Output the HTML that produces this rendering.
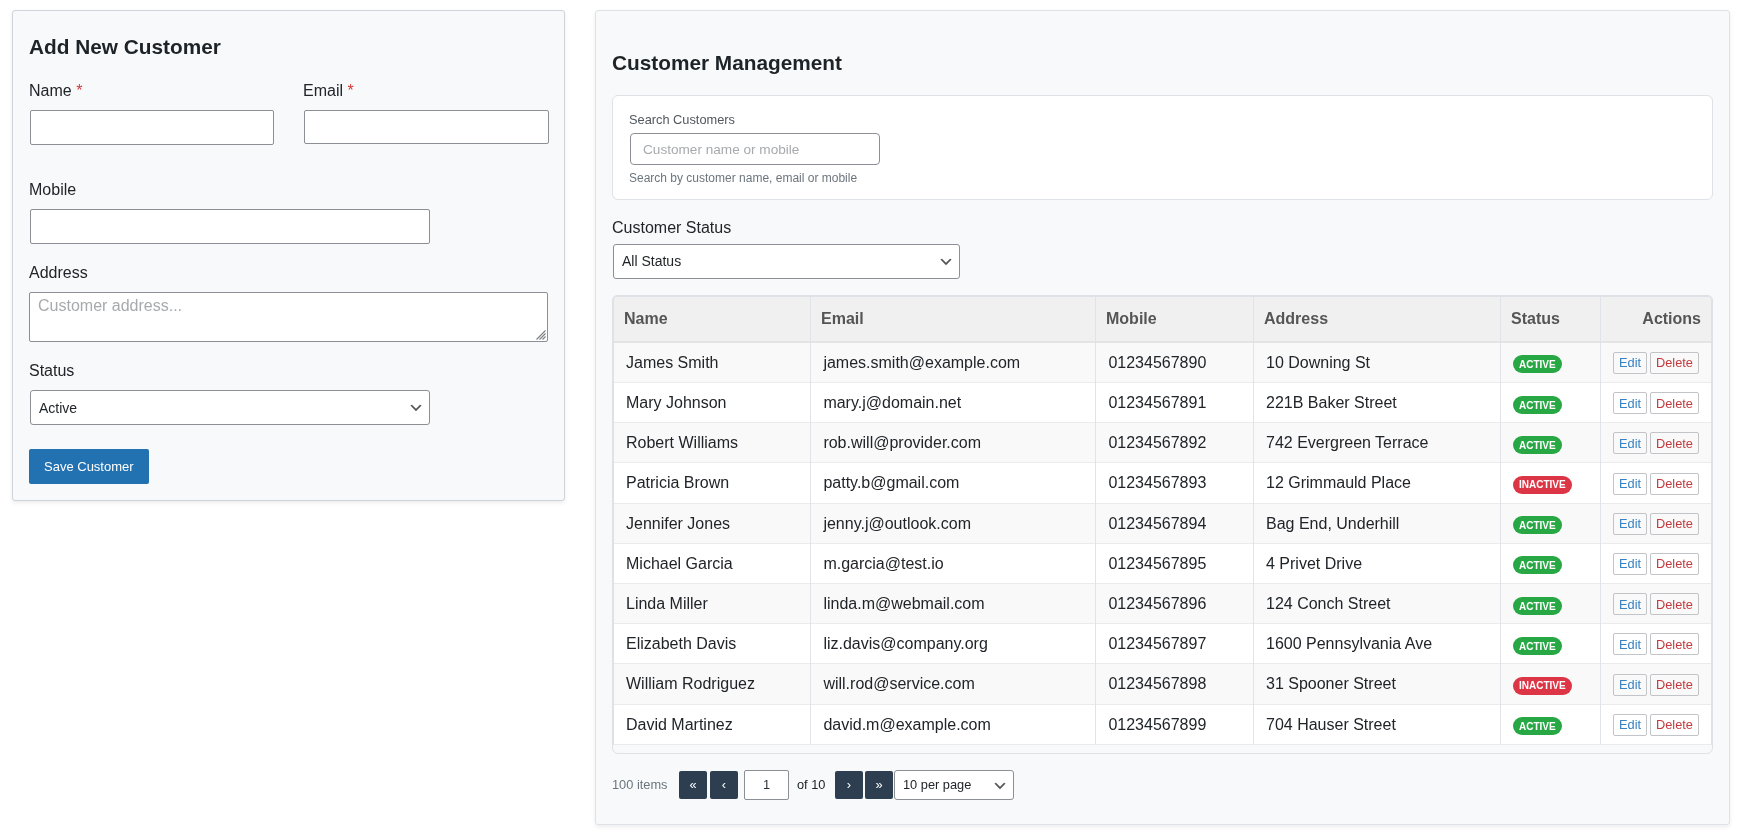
<!DOCTYPE html>
<html><head><meta charset="utf-8">
<style>
*{box-sizing:border-box;}
html,body{margin:0;padding:0;background:#fff;}
body{font-family:"Liberation Sans",sans-serif;color:#2c3338;width:1738px;height:832px;overflow:hidden;position:relative;}
.abs{position:absolute;}
.t{position:absolute;white-space:nowrap;line-height:1;}
</style></head><body>
<div style="position:absolute;left:0;top:0;width:1738px;height:832px;background:#fff;will-change:transform;">
<div class="abs" style="left:12px;top:10px;width:553px;height:491px;background:#f8f9fa;border:1px solid #ced4da;border-radius:3px;box-shadow:0 2px 4px rgba(0,0,0,.075);"></div>
<div class="t" style="left:29px;top:37px;font-size:20.8px;color:#1d2327;font-weight:700;">Add New Customer</div>
<div class="t" style="left:29px;top:83px;font-size:16px;color:#212529;">Name <span style="color:#d63638">*</span></div>
<div class="abs" style="left:30px;top:110px;width:244px;height:35px;background:#fff;border:1px solid #8c8f94;border-radius:2px;"></div>
<div class="t" style="left:303px;top:83px;font-size:16px;color:#212529;">Email <span style="color:#d63638">*</span></div>
<div class="abs" style="left:304px;top:110px;width:245px;height:34px;background:#fff;border:1px solid #8c8f94;border-radius:2px;"></div>
<div class="t" style="left:29px;top:182px;font-size:16px;color:#212529;">Mobile</div>
<div class="abs" style="left:30px;top:209px;width:400px;height:35px;background:#fff;border:1px solid #8c8f94;border-radius:2px;"></div>
<div class="t" style="left:29px;top:265px;font-size:16px;color:#212529;">Address</div>
<div class="abs" style="left:29px;top:292px;width:519px;height:50px;background:#fff;border:1px solid #8c8f94;border-radius:2px;"></div>
<div class="t" style="left:38px;top:298px;font-size:16px;color:#a7aaad;">Customer address...</div>
<svg class="abs" style="left:534px;top:328px;" width="13" height="13" viewBox="0 0 13 13"><path d="M2.5 11.5L11.5 2.5M5.5 11.5L11.5 5.5M8.5 11.5L11.5 8.5" stroke="#7a7d82" stroke-width="1.1"/></svg>
<div class="t" style="left:29px;top:363px;font-size:16px;color:#212529;">Status</div>
<div class="abs" style="left:30px;top:390px;width:400px;height:35px;background:#fff;border:1px solid #8c8f94;border-radius:3px;"></div>
<div class="t" style="left:39px;top:401px;font-size:14px;color:#212529;">Active</div>
<svg class="abs" style="left:408px;top:400px;" width="16" height="16" viewBox="0 0 20 20"><path d="M5 6l5 5 5-5 2 1-7 7-7-7 2-1z" fill="#555"/></svg>
<div class="abs" style="left:29px;top:449px;width:120px;height:35px;background:#2271b1;border-radius:2px;"></div>
<div class="t" style="left:44px;top:460px;font-size:13px;color:#fff;">Save Customer</div>
<div class="abs" style="left:595px;top:10px;width:1135px;height:815px;background:#f8f9fa;border:1px solid #dee2e6;border-radius:3px;box-shadow:0 2px 4px rgba(0,0,0,.075);"></div>
<div class="t" style="left:612px;top:53px;font-size:20.8px;color:#1d2327;font-weight:700;">Customer Management</div>
<div class="abs" style="left:612px;top:95px;width:1101px;height:105px;background:#fff;border:1px solid #dee2e6;border-radius:6px;"></div>
<div class="t" style="left:629px;top:114px;font-size:12.8px;color:#50575e;">Search Customers</div>
<div class="abs" style="left:630px;top:133px;width:250px;height:32px;background:#fff;border:1px solid #8c8f94;border-radius:2px;border-radius:4px;"></div>
<div class="t" style="left:643px;top:143px;font-size:13.6px;color:#a7aaad;">Customer name or mobile</div>
<div class="t" style="left:629px;top:172px;font-size:12px;color:#6c757d;">Search by customer name, email or mobile</div>
<div class="t" style="left:612px;top:220px;font-size:16px;color:#212529;">Customer Status</div>
<div class="abs" style="left:613px;top:244px;width:347px;height:35px;background:#fff;border:1px solid #8c8f94;border-radius:3px;"></div>
<div class="t" style="left:622px;top:254px;font-size:14px;color:#212529;">All Status</div>
<svg class="abs" style="left:938px;top:254px;" width="16" height="16" viewBox="0 0 20 20"><path d="M5 6l5 5 5-5 2 1-7 7-7-7 2-1z" fill="#555"/></svg>
<div class="abs" style="left:612px;top:295px;width:1101px;height:459px;background:#f8f9fa;border:1px solid #dee2e6;border-radius:5px 5px 6px 6px;"></div>
<div class="abs" style="left:614px;top:297px;width:1097px;height:44px;background:#f0f0f1;border-top-left-radius:3px;border-top-right-radius:3px;"></div>
<div class="abs" style="left:614px;top:341px;width:1097px;height:2px;background:#e4e4e4;"></div>
<div class="abs" style="left:614px;top:343px;width:1097px;height:39px;background:#f9f9f9;"></div>
<div class="abs" style="left:614px;top:382px;width:1097px;height:1px;background:#ebebeb;"></div>
<div class="abs" style="left:614px;top:383px;width:1097px;height:39px;background:#fff;"></div>
<div class="abs" style="left:614px;top:422px;width:1097px;height:1px;background:#ebebeb;"></div>
<div class="abs" style="left:614px;top:423px;width:1097px;height:39px;background:#f9f9f9;"></div>
<div class="abs" style="left:614px;top:462px;width:1097px;height:1px;background:#ebebeb;"></div>
<div class="abs" style="left:614px;top:463px;width:1097px;height:40px;background:#fff;"></div>
<div class="abs" style="left:614px;top:503px;width:1097px;height:1px;background:#ebebeb;"></div>
<div class="abs" style="left:614px;top:504px;width:1097px;height:39px;background:#f9f9f9;"></div>
<div class="abs" style="left:614px;top:543px;width:1097px;height:1px;background:#ebebeb;"></div>
<div class="abs" style="left:614px;top:544px;width:1097px;height:39px;background:#fff;"></div>
<div class="abs" style="left:614px;top:583px;width:1097px;height:1px;background:#ebebeb;"></div>
<div class="abs" style="left:614px;top:584px;width:1097px;height:39px;background:#f9f9f9;"></div>
<div class="abs" style="left:614px;top:623px;width:1097px;height:1px;background:#ebebeb;"></div>
<div class="abs" style="left:614px;top:624px;width:1097px;height:39px;background:#fff;"></div>
<div class="abs" style="left:614px;top:663px;width:1097px;height:1px;background:#ebebeb;"></div>
<div class="abs" style="left:614px;top:664px;width:1097px;height:40px;background:#f9f9f9;"></div>
<div class="abs" style="left:614px;top:704px;width:1097px;height:1px;background:#ebebeb;"></div>
<div class="abs" style="left:614px;top:705px;width:1097px;height:39px;background:#fff;"></div>
<div class="abs" style="left:614px;top:744px;width:1097px;height:1px;background:#ebebeb;"></div>
<div class="abs" style="left:810px;top:297px;width:1px;height:448px;background:#e0e4ea;"></div>
<div class="abs" style="left:1095px;top:297px;width:1px;height:448px;background:#e0e4ea;"></div>
<div class="abs" style="left:1253px;top:297px;width:1px;height:448px;background:#e0e4ea;"></div>
<div class="abs" style="left:1500px;top:297px;width:1px;height:448px;background:#e0e4ea;"></div>
<div class="abs" style="left:1600px;top:297px;width:1px;height:448px;background:#e0e4ea;"></div>
<div class="abs" style="left:613px;top:296px;width:1099px;height:449px;border:1px solid #dee2e6;border-bottom:0;border-top-left-radius:4px;border-top-right-radius:4px;"></div>
<div class="t" style="left:624px;top:311px;font-size:16px;color:#555;font-weight:700;">Name</div>
<div class="t" style="left:821px;top:311px;font-size:16px;color:#555;font-weight:700;">Email</div>
<div class="t" style="left:1106px;top:311px;font-size:16px;color:#555;font-weight:700;">Mobile</div>
<div class="t" style="left:1264px;top:311px;font-size:16px;color:#555;font-weight:700;">Address</div>
<div class="t" style="left:1511px;top:311px;font-size:16px;color:#555;font-weight:700;">Status</div>
<div class="t" style="left:1600px;top:311px;font-size:16px;color:#555;font-weight:700;width:101px;text-align:right;">Actions</div>
<div class="t" style="left:626px;top:355px;font-size:16px;color:#212529;">James Smith</div>
<div class="t" style="left:823.4px;top:355px;font-size:16px;color:#212529;">james.smith@example.com</div>
<div class="t" style="left:1108.4px;top:355px;font-size:16px;color:#212529;">01234567890</div>
<div class="t" style="left:1266px;top:355px;font-size:16px;color:#212529;">10 Downing St</div>
<div class="abs" style="left:1513px;top:355px;width:49px;height:18px;background:#28a745;border-radius:9px;"></div>
<div class="t" style="left:1519px;top:360px;font-size:10px;color:#fff;font-weight:700;">ACTIVE</div>
<div class="abs" style="left:1613px;top:352px;width:34px;height:22px;border:1px solid #c3c4c7;border-radius:2px;"></div>
<div class="t" style="left:1619px;top:357px;font-size:12.8px;color:#3582c4;">Edit</div>
<div class="abs" style="left:1650px;top:352px;width:49px;height:22px;border:1px solid #c3c4c7;border-radius:2px;"></div>
<div class="t" style="left:1656px;top:357px;font-size:12.8px;color:#c23a3e;">Delete</div>
<div class="t" style="left:626px;top:395px;font-size:16px;color:#212529;">Mary Johnson</div>
<div class="t" style="left:823.4px;top:395px;font-size:16px;color:#212529;">mary.j@domain.net</div>
<div class="t" style="left:1108.4px;top:395px;font-size:16px;color:#212529;">01234567891</div>
<div class="t" style="left:1266px;top:395px;font-size:16px;color:#212529;">221B Baker Street</div>
<div class="abs" style="left:1513px;top:396px;width:49px;height:18px;background:#28a745;border-radius:9px;"></div>
<div class="t" style="left:1519px;top:401px;font-size:10px;color:#fff;font-weight:700;">ACTIVE</div>
<div class="abs" style="left:1613px;top:392px;width:34px;height:22px;border:1px solid #c3c4c7;border-radius:2px;"></div>
<div class="t" style="left:1619px;top:398px;font-size:12.8px;color:#3582c4;">Edit</div>
<div class="abs" style="left:1650px;top:392px;width:49px;height:22px;border:1px solid #c3c4c7;border-radius:2px;"></div>
<div class="t" style="left:1656px;top:398px;font-size:12.8px;color:#c23a3e;">Delete</div>
<div class="t" style="left:626px;top:435px;font-size:16px;color:#212529;">Robert Williams</div>
<div class="t" style="left:823.4px;top:435px;font-size:16px;color:#212529;">rob.will@provider.com</div>
<div class="t" style="left:1108.4px;top:435px;font-size:16px;color:#212529;">01234567892</div>
<div class="t" style="left:1266px;top:435px;font-size:16px;color:#212529;">742 Evergreen Terrace</div>
<div class="abs" style="left:1513px;top:436px;width:49px;height:18px;background:#28a745;border-radius:9px;"></div>
<div class="t" style="left:1519px;top:441px;font-size:10px;color:#fff;font-weight:700;">ACTIVE</div>
<div class="abs" style="left:1613px;top:432px;width:34px;height:22px;border:1px solid #c3c4c7;border-radius:2px;"></div>
<div class="t" style="left:1619px;top:438px;font-size:12.8px;color:#3582c4;">Edit</div>
<div class="abs" style="left:1650px;top:432px;width:49px;height:22px;border:1px solid #c3c4c7;border-radius:2px;"></div>
<div class="t" style="left:1656px;top:438px;font-size:12.8px;color:#c23a3e;">Delete</div>
<div class="t" style="left:626px;top:475px;font-size:16px;color:#212529;">Patricia Brown</div>
<div class="t" style="left:823.4px;top:475px;font-size:16px;color:#212529;">patty.b@gmail.com</div>
<div class="t" style="left:1108.4px;top:475px;font-size:16px;color:#212529;">01234567893</div>
<div class="t" style="left:1266px;top:475px;font-size:16px;color:#212529;">12 Grimmauld Place</div>
<div class="abs" style="left:1513px;top:476px;width:59px;height:18px;background:#dc3545;border-radius:9px;"></div>
<div class="t" style="left:1519px;top:480px;font-size:10px;color:#fff;font-weight:700;">INACTIVE</div>
<div class="abs" style="left:1613px;top:473px;width:34px;height:22px;border:1px solid #c3c4c7;border-radius:2px;"></div>
<div class="t" style="left:1619px;top:478px;font-size:12.8px;color:#3582c4;">Edit</div>
<div class="abs" style="left:1650px;top:473px;width:49px;height:22px;border:1px solid #c3c4c7;border-radius:2px;"></div>
<div class="t" style="left:1656px;top:478px;font-size:12.8px;color:#c23a3e;">Delete</div>
<div class="t" style="left:626px;top:516px;font-size:16px;color:#212529;">Jennifer Jones</div>
<div class="t" style="left:823.4px;top:516px;font-size:16px;color:#212529;">jenny.j@outlook.com</div>
<div class="t" style="left:1108.4px;top:516px;font-size:16px;color:#212529;">01234567894</div>
<div class="t" style="left:1266px;top:516px;font-size:16px;color:#212529;">Bag End, Underhill</div>
<div class="abs" style="left:1513px;top:516px;width:49px;height:18px;background:#28a745;border-radius:9px;"></div>
<div class="t" style="left:1519px;top:521px;font-size:10px;color:#fff;font-weight:700;">ACTIVE</div>
<div class="abs" style="left:1613px;top:513px;width:34px;height:22px;border:1px solid #c3c4c7;border-radius:2px;"></div>
<div class="t" style="left:1619px;top:518px;font-size:12.8px;color:#3582c4;">Edit</div>
<div class="abs" style="left:1650px;top:513px;width:49px;height:22px;border:1px solid #c3c4c7;border-radius:2px;"></div>
<div class="t" style="left:1656px;top:518px;font-size:12.8px;color:#c23a3e;">Delete</div>
<div class="t" style="left:626px;top:556px;font-size:16px;color:#212529;">Michael Garcia</div>
<div class="t" style="left:823.4px;top:556px;font-size:16px;color:#212529;">m.garcia@test.io</div>
<div class="t" style="left:1108.4px;top:556px;font-size:16px;color:#212529;">01234567895</div>
<div class="t" style="left:1266px;top:556px;font-size:16px;color:#212529;">4 Privet Drive</div>
<div class="abs" style="left:1513px;top:556px;width:49px;height:18px;background:#28a745;border-radius:9px;"></div>
<div class="t" style="left:1519px;top:561px;font-size:10px;color:#fff;font-weight:700;">ACTIVE</div>
<div class="abs" style="left:1613px;top:553px;width:34px;height:22px;border:1px solid #c3c4c7;border-radius:2px;"></div>
<div class="t" style="left:1619px;top:558px;font-size:12.8px;color:#3582c4;">Edit</div>
<div class="abs" style="left:1650px;top:553px;width:49px;height:22px;border:1px solid #c3c4c7;border-radius:2px;"></div>
<div class="t" style="left:1656px;top:558px;font-size:12.8px;color:#c23a3e;">Delete</div>
<div class="t" style="left:626px;top:596px;font-size:16px;color:#212529;">Linda Miller</div>
<div class="t" style="left:823.4px;top:596px;font-size:16px;color:#212529;">linda.m@webmail.com</div>
<div class="t" style="left:1108.4px;top:596px;font-size:16px;color:#212529;">01234567896</div>
<div class="t" style="left:1266px;top:596px;font-size:16px;color:#212529;">124 Conch Street</div>
<div class="abs" style="left:1513px;top:597px;width:49px;height:18px;background:#28a745;border-radius:9px;"></div>
<div class="t" style="left:1519px;top:602px;font-size:10px;color:#fff;font-weight:700;">ACTIVE</div>
<div class="abs" style="left:1613px;top:593px;width:34px;height:22px;border:1px solid #c3c4c7;border-radius:2px;"></div>
<div class="t" style="left:1619px;top:599px;font-size:12.8px;color:#3582c4;">Edit</div>
<div class="abs" style="left:1650px;top:593px;width:49px;height:22px;border:1px solid #c3c4c7;border-radius:2px;"></div>
<div class="t" style="left:1656px;top:599px;font-size:12.8px;color:#c23a3e;">Delete</div>
<div class="t" style="left:626px;top:636px;font-size:16px;color:#212529;">Elizabeth Davis</div>
<div class="t" style="left:823.4px;top:636px;font-size:16px;color:#212529;">liz.davis@company.org</div>
<div class="t" style="left:1108.4px;top:636px;font-size:16px;color:#212529;">01234567897</div>
<div class="t" style="left:1266px;top:636px;font-size:16px;color:#212529;">1600 Pennsylvania Ave</div>
<div class="abs" style="left:1513px;top:637px;width:49px;height:18px;background:#28a745;border-radius:9px;"></div>
<div class="t" style="left:1519px;top:642px;font-size:10px;color:#fff;font-weight:700;">ACTIVE</div>
<div class="abs" style="left:1613px;top:633px;width:34px;height:22px;border:1px solid #c3c4c7;border-radius:2px;"></div>
<div class="t" style="left:1619px;top:639px;font-size:12.8px;color:#3582c4;">Edit</div>
<div class="abs" style="left:1650px;top:633px;width:49px;height:22px;border:1px solid #c3c4c7;border-radius:2px;"></div>
<div class="t" style="left:1656px;top:639px;font-size:12.8px;color:#c23a3e;">Delete</div>
<div class="t" style="left:626px;top:676px;font-size:16px;color:#212529;">William Rodriguez</div>
<div class="t" style="left:823.4px;top:676px;font-size:16px;color:#212529;">will.rod@service.com</div>
<div class="t" style="left:1108.4px;top:676px;font-size:16px;color:#212529;">01234567898</div>
<div class="t" style="left:1266px;top:676px;font-size:16px;color:#212529;">31 Spooner Street</div>
<div class="abs" style="left:1513px;top:677px;width:59px;height:18px;background:#dc3545;border-radius:9px;"></div>
<div class="t" style="left:1519px;top:681px;font-size:10px;color:#fff;font-weight:700;">INACTIVE</div>
<div class="abs" style="left:1613px;top:674px;width:34px;height:22px;border:1px solid #c3c4c7;border-radius:2px;"></div>
<div class="t" style="left:1619px;top:679px;font-size:12.8px;color:#3582c4;">Edit</div>
<div class="abs" style="left:1650px;top:674px;width:49px;height:22px;border:1px solid #c3c4c7;border-radius:2px;"></div>
<div class="t" style="left:1656px;top:679px;font-size:12.8px;color:#c23a3e;">Delete</div>
<div class="t" style="left:626px;top:717px;font-size:16px;color:#212529;">David Martinez</div>
<div class="t" style="left:823.4px;top:717px;font-size:16px;color:#212529;">david.m@example.com</div>
<div class="t" style="left:1108.4px;top:717px;font-size:16px;color:#212529;">01234567899</div>
<div class="t" style="left:1266px;top:717px;font-size:16px;color:#212529;">704 Hauser Street</div>
<div class="abs" style="left:1513px;top:717px;width:49px;height:18px;background:#28a745;border-radius:9px;"></div>
<div class="t" style="left:1519px;top:722px;font-size:10px;color:#fff;font-weight:700;">ACTIVE</div>
<div class="abs" style="left:1613px;top:714px;width:34px;height:22px;border:1px solid #c3c4c7;border-radius:2px;"></div>
<div class="t" style="left:1619px;top:719px;font-size:12.8px;color:#3582c4;">Edit</div>
<div class="abs" style="left:1650px;top:714px;width:49px;height:22px;border:1px solid #c3c4c7;border-radius:2px;"></div>
<div class="t" style="left:1656px;top:719px;font-size:12.8px;color:#c23a3e;">Delete</div>
<div class="t" style="left:612px;top:779px;font-size:12.8px;color:#6c757d;">100 items</div>
<div class="abs" style="left:679px;top:771px;width:28px;height:28px;background:#2c3e50;border-radius:2px;"></div>
<div class="t" style="left:679px;top:779px;font-size:12.8px;color:#fff;width:28px;text-align:center;">&laquo;</div>
<div class="abs" style="left:710px;top:771px;width:28px;height:28px;background:#2c3e50;border-radius:2px;"></div>
<div class="t" style="left:710px;top:779px;font-size:12.8px;color:#fff;width:28px;text-align:center;">&lsaquo;</div>
<div class="abs" style="left:835px;top:771px;width:28px;height:28px;background:#2c3e50;border-radius:2px;"></div>
<div class="t" style="left:835px;top:779px;font-size:12.8px;color:#fff;width:28px;text-align:center;">&rsaquo;</div>
<div class="abs" style="left:865px;top:771px;width:28px;height:28px;background:#2c3e50;border-radius:2px;"></div>
<div class="t" style="left:865px;top:779px;font-size:12.8px;color:#fff;width:28px;text-align:center;">&raquo;</div>
<div class="abs" style="left:744px;top:770px;width:45px;height:30px;background:#fff;border:1px solid #8c8f94;border-radius:2px;"></div>
<div class="t" style="left:744px;top:779px;font-size:12.8px;color:#2c3338;width:45px;text-align:center;">1</div>
<div class="t" style="left:797px;top:779px;font-size:12.8px;color:#212529;">of 10</div>
<div class="abs" style="left:894px;top:770px;width:120px;height:30px;background:#fff;border:1px solid #8c8f94;border-radius:3px;"></div>
<div class="t" style="left:903px;top:779px;font-size:12.8px;color:#212529;">10 per page</div>
<svg class="abs" style="left:992px;top:778px;" width="16" height="16" viewBox="0 0 20 20"><path d="M5 6l5 5 5-5 2 1-7 7-7-7 2-1z" fill="#555"/></svg>
</div></body></html>
